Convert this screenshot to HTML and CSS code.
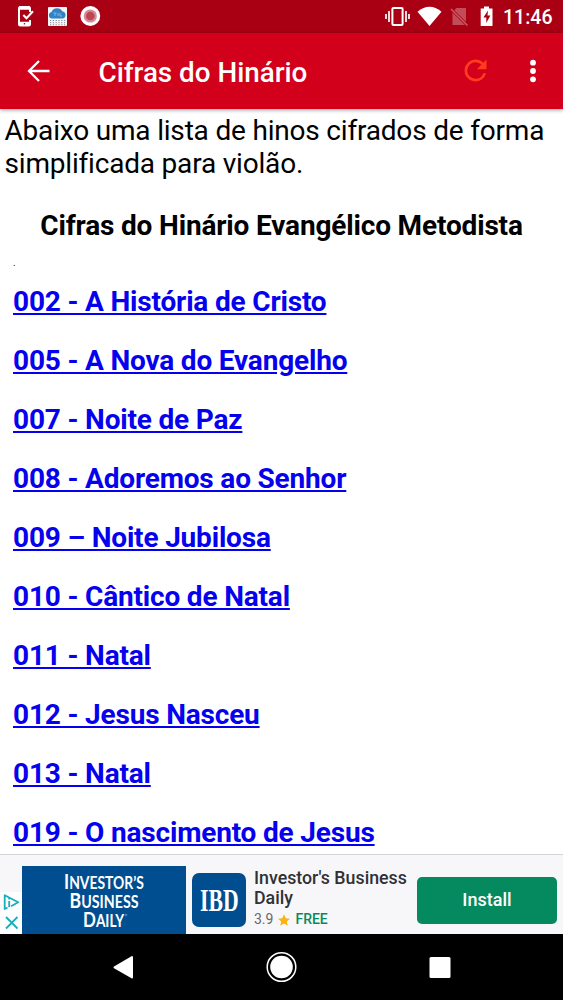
FILE: index.html
```html
<!DOCTYPE html>
<html lang="pt-BR">
<head>
<meta charset="utf-8">
<title>Cifras do Hinário</title>
<link rel="stylesheet" href="styles.css">
</head>
<body>
<div class="screen">
  <div class="status">
    <svg class="status-left" width="110" height="33" viewBox="0 0 110 33">
      <path d="M30 12V8.500q0-1.500-1.500-1.500H20.500q-1.500 0-1.500 1.500V24q0 1.500 1.500 1.500h8q1.500 0 1.500-1.500V20" fill="none" stroke="#fff" stroke-width="2"/>
      <path d="M19 8h11M19 23.500h11" stroke="#fff" stroke-width="3.500"/>
      <path d="M23.300 15l3.200 3.200 6.500-7" fill="none" stroke="#fff" stroke-width="2.100"/>
      <circle cx="24.500" cy="23.700" r=".8" fill="#a90014"/>
      <rect x="48" y="7" width="19" height="19" rx="1" fill="#f4f6f8"/>
      <path d="M52 18.500a3.300 3.300 0 0 1-.5-6.500a6 6 0 0 1 11-.500a3.600 3.600 0 0 1 .5 7z" fill="#3283c5"/>
      <path d="M53.500 13h3M55 13v3M58 13v3M60 13v3h2" stroke="#8fc3e8" stroke-width=".8" fill="none"/>
      <path d="M50 20.500h16M50 22.700h16M50 24.800h16" stroke="#68737d" stroke-width=".8" stroke-dasharray="1.200 1.600"/>
      <circle cx="90.300" cy="16" r="9.900" fill="#fff"/>
      <circle cx="90.300" cy="16" r="6.600" fill="#d58b94"/>
      <circle cx="90.300" cy="16" r="4.300" fill="#bd4655"/>
    </svg>
    <svg class="status-right" width="115" height="33" viewBox="383 0 115 33">
      <rect x="392.400" y="8" width="10.200" height="17" rx="1" fill="none" stroke="#fff" stroke-width="2"/>
      <path d="M389 11v11M386 14v5M406 11v11M409 14v5" stroke="#fff" stroke-width="1.700"/>
      <path d="M417.500 11.700Q429.500 1.800 441.500 11.700L429.500 26z" fill="#fff"/>
      <path d="M456.500 8h9.500v17h-13.500V12z" fill="#c14d59"/>
      <path d="M451.500 9.500l16 16" stroke="#a90014" stroke-width="3"/>
      <path d="M451 9l16.500 16.500" stroke="#c75b66" stroke-width="1.600"/>
      <path d="M484 6.500h5V8.500h3.500V26H480.700V8.500H484z" fill="#fff"/>
      <path d="M488 10.500l-4.600 7h2.900v5.500l4.100-7.500h-2.900z" fill="#a90014"/>
    </svg>
    <span class="clock">11:46</span>
  </div>
  <header class="appbar">
    <svg class="back" width="24" height="24" viewBox="0 0 24 24"><path d="M13 2L3 12l10 10M3 12H23.500" fill="none" stroke="#fff" stroke-width="2.300"/></svg>
    <h1 class="title">Cifras do Hinário</h1>
    <svg class="refresh" width="33" height="33" viewBox="0 0 24 24"><path fill="#ff3b20" d="M17.650 6.350A7.958 7.958 0 0 0 12 4a8 8 0 1 0 7.730 10h-2.080A5.990 5.990 0 0 1 12 18a6 6 0 1 1 0-12c1.660 0 3.140.690 4.220 1.780L13 11h7V4z"/></svg>
    <svg class="more" width="8" height="24" viewBox="0 0 8 24"><g fill="#fff"><circle cx="4" cy="3.700" r="2.900"/><circle cx="4" cy="12" r="2.900"/><circle cx="4" cy="20.300" r="2.900"/></g></svg>
  </header>
  <main class="content">
    <p class="intro">Abaixo uma lista de hinos cifrados de forma simplificada para violão.</p>
    <h2 class="heading">Cifras do Hinário Evangélico Metodista</h2>
    <div class="dot">.</div>
    <ul class="hymns">
      <li><a href="#">002 - A História de Cristo</a></li>
      <li><a href="#">005 - A Nova do Evangelho</a></li>
      <li><a href="#">007 - Noite de Paz</a></li>
      <li><a href="#">008 - Adoremos ao Senhor</a></li>
      <li><a href="#">009 – Noite Jubilosa</a></li>
      <li><a href="#">010 - Cântico de Natal</a></li>
      <li><a href="#">011 - Natal</a></li>
      <li><a href="#">012 - Jesus Nasceu</a></li>
      <li><a href="#">013 - Natal</a></li>
      <li><a href="#">019 - O nascimento de Jesus</a></li>
    </ul>
  </main>
  <section class="ad">
    <svg class="choices" width="22" height="42" viewBox="0 0 22 42">
      <rect width="22" height="42" fill="#fff"/>
      <g fill="none" stroke="#19aebb" stroke-width="1.800" stroke-linejoin="round">
        <path d="M7.500 15.500L4.700 17V3.200L18.200 10.200 11 14.200"/>
        <path d="M9.200 9v6M9.200 6v1.500"/>
        <path d="M6 25l11.500 11.500M17.500 25L6 36.500"/>
      </g>
    </svg>
    <svg class="banner" width="164" height="68" viewBox="0 0 164 68">
      <rect width="164" height="68" fill="#004d8f"/>
      <g class="brand">
        <text x="42" y="23" textLength="80" lengthAdjust="spacingAndGlyphs"><tspan class="cap">I</tspan>NVESTOR’S</text>
        <text x="47.500" y="42" textLength="69" lengthAdjust="spacingAndGlyphs"><tspan class="cap">B</tspan>USINESS</text>
        <text x="61" y="61" textLength="41" lengthAdjust="spacingAndGlyphs"><tspan class="cap">D</tspan>AILY</text>
        <circle cx="104" cy="49" r="1" fill="none" stroke="#8fb3d1" stroke-width=".5"/>
      </g>
    </svg>
    <svg class="ibd" width="54" height="54" viewBox="0 0 54 54">
      <rect width="54" height="54" rx="7" fill="#004d8f"/>
      <text class="ibd-text" transform="translate(8 37.500) scale(.7 1)">IBD</text>
    </svg>
    <div class="info">
      <div class="name">Investor's Business Daily</div>
      <div class="meta"><span>3.9</span>
        <svg width="12" height="12" viewBox="0 0 24 24"><path fill="#f9b315" d="M12 .5l3.500 8 8.500.8-6.400 5.700 1.900 8.500L12 19l-7.500 4.500L6.400 15 0 9.300l8.500-.8z"/></svg>
        <span class="free">FREE</span></div>
    </div>
    <div class="install">Install</div>
  </section>
  <nav class="nav">
    <svg width="563" height="66" viewBox="0 0 563 66">
      <path d="M114.500 33.300L132 23v20.500z" fill="#fff" stroke="#fff" stroke-width="2" stroke-linejoin="round"/>
      <circle cx="281.500" cy="33" r="14.300" fill="none" stroke="#fff" stroke-width="1.500"/>
      <circle cx="281.500" cy="33" r="11.300" fill="#fff"/>
      <rect x="429.500" y="23" width="21" height="21" rx="1.500" fill="#fff"/>
    </svg>
  </nav>
</div>
</body>
</html>
```
FILE: styles.css
```css
* { box-sizing: border-box; }
body { margin: 0; background: #fff; font-family: Roboto, sans-serif; color: #000; }
svg { display: block; flex: none; }
.screen { width: 563px; height: 1000px; display: flex; flex-direction: column; overflow: hidden; }
.status { height: 33px; flex: none; display: flex; background: #a90014; }
.status-right { margin-left: 273px; }
.clock { margin-left: 5px; font-size: 19.5px; font-weight: 500; line-height: 35px; color: #fff; white-space: nowrap; }
.appbar { height: 76px; flex: none; display: flex; align-items: center; background: #d2001a; box-shadow: 0 1px 4px rgba(0, 0, 0, .4); z-index: 1; }
.back { margin-left: 26px; }
.title { margin: 3px 0 0 48.5px; width: 360.5px; font-size: 27.8px; font-weight: 500; line-height: 32px; color: #fff; }
.refresh { margin: 0 0 1px; }
.more { margin-left: 37px; }
.content { height: 745px; flex: none; overflow: hidden; padding-top: 5px; }
.intro { margin: 0 4.5px; font-size: 28px; line-height: 33px; letter-spacing: -.19px; }
.heading { margin: 29px 0 0; text-align: center; font-size: 28px; font-weight: 700; line-height: 33px; letter-spacing: -.16px; }
.dot { margin: 15px 0 0 13px; height: 12px; font-size: 10px; line-height: 12px; color: #222; }
.hymns { list-style: none; margin: 16px 0 0 13px; padding: 0; display: flex; flex-direction: column; gap: 26px; font-size: 28px; font-weight: 700; line-height: 33px; letter-spacing: -.18px; }
.hymns a { color: #0500ee; }
.ad { height: 80px; flex: none; display: flex; background: #f7f7f9; border-top: 1px solid #d4d4d6; }
.choices { margin-top: 37px; }
.banner { margin-top: 11px; }
.brand { font-family: Lato, sans-serif; font-size: 16.5px; font-weight: 700; fill: #fff; }
.cap { font-size: 20.5px; }
.ibd { margin: 18px 0 0 6px; }
.ibd-text { font-family: "Liberation Serif", serif; font-size: 31px; font-weight: 700; fill: #fff; }
.info { margin: 13px 0 0 8px; width: 163px; flex: none; }
.name { font-size: 17.8px; font-weight: 500; line-height: 19.5px; color: #303135; }
.meta { display: flex; align-items: center; margin-top: 4px; font-size: 14px; line-height: 17px; color: #66676b; }
.meta svg { margin: 1px 5px 0 5px; }
.free { font-weight: 500; color: #078a5c; }
.install { margin-top: 22px; width: 140px; height: 47px; border-radius: 5px; background: #048a5e; color: #fff; text-align: center; font-size: 18px; font-weight: 500; line-height: 46px; }
.nav { height: 66px; flex: none; background: #000; }
```
